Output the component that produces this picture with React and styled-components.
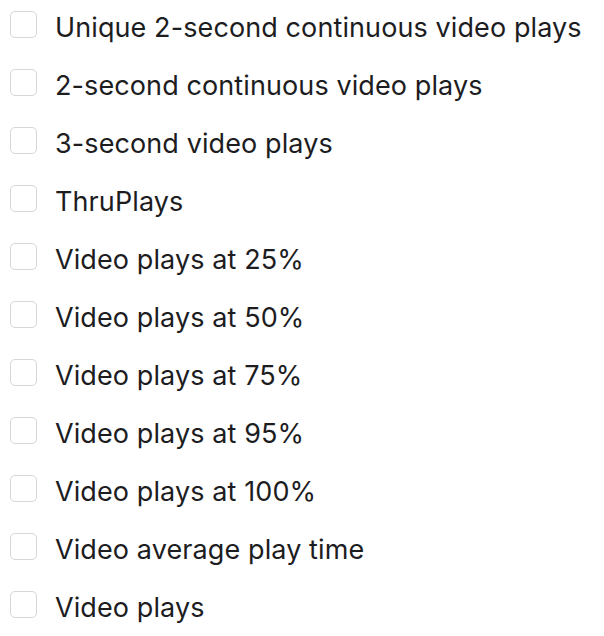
import React, { useState } from 'react'
import styled, { createGlobalStyle } from 'styled-components'

const GlobalStyle = createGlobalStyle`
  html, body {
    margin: 0;
    padding: 0;
    background: #ffffff;
  }
  body {
    font-family: Inter, "Noto Sans", "Liberation Sans", sans-serif;
    -webkit-font-smoothing: antialiased;
  }
`

const List = styled.ul`
  list-style: none;
  margin: 0;
  padding: 0 0 0 10px;
  display: flex;
  flex-direction: column;
  gap: 9px;
`

const Row = styled.li`
  height: 49px;
  display: flex;
  align-items: center;
  gap: 18px;
  cursor: pointer;
`

const Box = styled.span`
  box-sizing: border-box;
  width: 27px;
  height: 27px;
  flex: none;
  border: 1.5px solid ${p => p.checked ? '#0a66ff' : '#d6d6db'};
  background: ${p => p.checked ? '#0a66ff' : '#ffffff'};
  border-radius: 5px;
`

const Label = styled.span`
  font-size: 27px;
  line-height: 32px;
  margin-top: 6px;
  color: #1d1d1f;
  letter-spacing: 0.1px;
  white-space: nowrap;
`

const metrics = [
  'Unique 2-second continuous video plays',
  '2-second continuous video plays',
  '3-second video plays',
  'ThruPlays',
  'Video plays at 25%',
  'Video plays at 50%',
  'Video plays at 75%',
  'Video plays at 95%',
  'Video plays at 100%',
  'Video average play time',
  'Video plays'
]

export default function App () {
  const [checked, setChecked] = useState({})
  const toggle = m => setChecked(c => ({ ...c, [m]: !c[m] }))

  return (
    <>
      <GlobalStyle />
      <List>
        {metrics.map(m =>
          <Row key={m} onClick={() => toggle(m)}>
            <Box checked={!!checked[m]} />
            <Label>{m}</Label>
          </Row>
        )}
      </List>
    </>
  )
}
